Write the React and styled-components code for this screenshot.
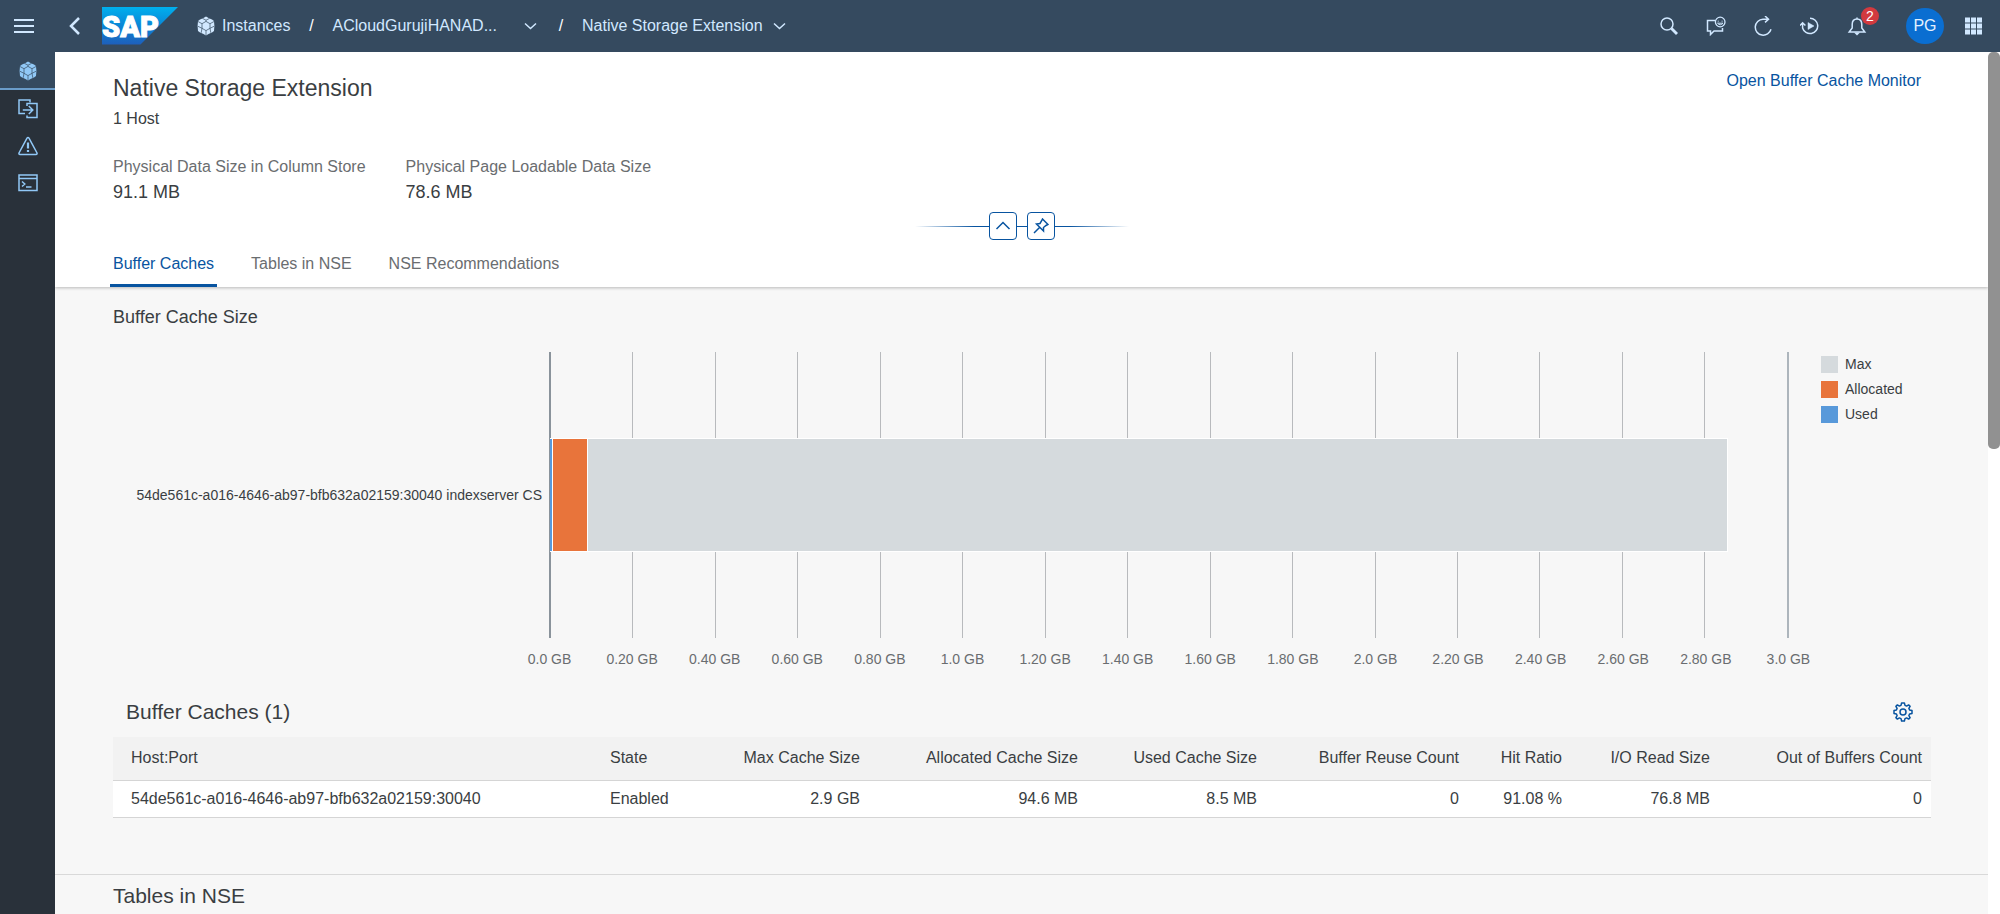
import React from "react";
import styled, { createGlobalStyle } from "styled-components";

const GlobalStyle = createGlobalStyle`
  *, *::before, *::after {
    box-sizing: border-box;
  }

  body {
    margin: 0;
    font-family: "Liberation Sans", Arial, sans-serif;
    font-size: 16px;
    line-height: 20px;
    color: #3a3e42;
    background-color: #f7f7f7;
  }

  h1, h2, h3, p, dl, dd, ul {
    margin: 0;
    padding: 0;
    font-weight: normal;
  }

  button {
    padding: 0;
    border: none;
    background: none;
    font: inherit;
    color: inherit;
    cursor: pointer;
  }

  a {
    color: inherit;
    text-decoration: none;
  }

  svg {
    display: block;
  }
`;

const Page = styled.div`
  display: flex;
  flex-direction: column;
  height: 100vh;
  overflow: hidden;
`;

/* ---------- Shell bar ---------- */

const ShellBar = styled.header`
  display: flex;
  align-items: center;
  justify-content: space-between;
  flex-shrink: 0;
  height: 52px;
  padding-right: 16px;
  background-color: #354a5f;
  color: #d1e8ff;
`;

const ShellGroup = styled.div`
  display: flex;
  align-items: center;
`;

const ShellButton = styled.button`
  position: relative;
  display: flex;
  align-items: center;
  justify-content: center;
  width: ${({ $width }) => $width || 47}px;
  height: 40px;
`;

const Badge = styled.span`
  position: absolute;
  top: 1px;
  right: 1px;
  width: 18px;
  height: 18px;
  border-radius: 9px;
  background-color: #d23a3f;
  color: white;
  font-size: 14px;
  line-height: 18px;
  text-align: center;
`;

const Avatar = styled.button`
  width: 38px;
  height: 36px;
  margin: 0 20px 0 26px;
  border-radius: 50%;
  background-color: #0a6ed1;
  color: #e3f1ff;
`;

const Breadcrumb = styled.nav`
  display: flex;
  align-items: center;
  margin-left: 18px;
  white-space: nowrap;
`;

const Crumb = styled.a`
  display: flex;
  align-items: center;
  gap: 6px;
`;

const Slash = styled.span`
  width: 42px;
  color: white;
  text-align: center;
`;

const CrumbMenu = styled.button`
  display: flex;
  align-items: center;
  justify-content: center;
  width: 18px;
  height: 28px;
  margin-left: ${({ $gap }) => $gap}px;
`;

/* ---------- Layout ---------- */

const Body = styled.div`
  display: flex;
  flex: 1;
  min-height: 0;
`;

const SideNav = styled.nav`
  display: flex;
  flex-direction: column;
  flex-shrink: 0;
  width: 55px;
  background-color: #29313a;
`;

const SideItem = styled.button`
  display: flex;
  align-items: center;
  justify-content: center;
  height: 37px;
  color: #91c8f6;

  &.active {
    height: 38px;
    padding-top: 2px;
    background-color: #354a5f;
    border-bottom: 2px solid #6a9cc9;
  }
`;

const Main = styled.main`
  flex: 1;
  min-width: 0;
  overflow: hidden;
`;

const ScrollTrack = styled.div`
  flex-shrink: 0;
  width: 12px;
  background-color: white;
`;

const ScrollThumb = styled.div`
  height: 46%;
  border-radius: 5px;
  background-color: #919191;
`;

/* ---------- Object header ---------- */

const ObjectHeader = styled.section`
  position: relative;
  background-color: white;
  box-shadow: 0 1px 3px rgba(0, 0, 0, 0.25);
`;

const HeaderTop = styled.div`
  display: flex;
  justify-content: space-between;
  align-items: flex-start;
  padding: 21px 67px 0 58px;
`;

const PageTitle = styled.h1`
  margin-bottom: 6px;
  font-size: 23px;
  line-height: 30px;
`;

const HeaderLink = styled.a`
  color: #0854a0;
  line-height: 16px;
`;

const Facts = styled.dl`
  display: flex;
  gap: 40px;
  padding: 28px 58px 8px;
`;

const FactLabel = styled.dt`
  margin-bottom: 3px;
  color: #6a6d70;
`;

const FactValue = styled.dd`
  font-size: 18px;
  line-height: 24px;
`;

const HeaderActions = styled.div`
  display: flex;
  align-items: center;
  justify-content: center;
  height: 28px;
`;

const FadeLine = styled.span`
  width: ${({ $width }) => $width}px;
  height: 1px;
  background: ${({ $to }) =>
    $to ? `linear-gradient(to ${$to}, #0854a0 20%, transparent)` : "#0854a0"};
`;

const SquareButton = styled.button`
  display: flex;
  align-items: center;
  justify-content: center;
  width: 28px;
  height: 28px;
  border: 1px solid #0854a0;
  border-radius: 4px;
  color: #0854a0;
`;

const Tabs = styled.div`
  display: flex;
  gap: 31px;
  padding: 0 55px;
`;

const Tab = styled.button`
  height: 47px;
  padding: 14px 3px 10px;
  border-bottom: 3px solid transparent;
  color: #6a6d70;
  line-height: 20px;

  &.active {
    color: #0854a0;
    border-bottom-color: #0854a0;
  }
`;

/* ---------- Sections ---------- */

const Section = styled.section`
  padding: 18px 57px 56px 58px;
  border-bottom: 1px solid #d9d9d9;
`;

const SectionTitle = styled.h2`
  font-size: 18px;
  line-height: 24px;
`;

const TableTitle = styled.h2`
  font-size: 21px;
  line-height: 24px;
`;

const LowerSection = styled.section`
  padding: 9px 58px;
`;

/* ---------- Chart ---------- */

const Chart = styled.div`
  display: grid;
  grid-template-columns: 436px 1fr 142px;
  margin-top: 23px;
  font-size: 14px;
`;

const Category = styled.div`
  display: flex;
  align-items: center;
  justify-content: flex-end;
  padding-right: 7px;
`;

const Plot = styled.div`
  display: grid;
  align-items: center;
  height: 286px;
`;

const GridLines = styled.div`
  grid-area: 1 / 1;
  display: flex;
  justify-content: space-between;
  height: 100%;
`;

const GridLine = styled.span`
  width: 1px;
  background-color: #b8babd;

  &:first-child {
    width: 2px;
    background-color: #8a939b;
  }

  &:last-child {
    width: 2px;
    background-color: #adb5bc;
  }
`;

const BarRow = styled.div`
  grid-area: 1 / 1;
  display: flex;
  height: 114px;
  margin-left: 1px;
`;

const Bar = styled.span`
  border: solid white;
  border-width: 1px 1px 1px 0;
  background-color: ${({ $color }) => $color};
`;

const Legend = styled.ul`
  display: flex;
  flex-direction: column;
  gap: 5px;
  padding: 2px 0 0 32px;
  list-style: none;
`;

const LegendItem = styled.li`
  display: flex;
  align-items: center;
  gap: 7px;

  &::before {
    content: "";
    width: 17px;
    height: 17px;
    background-color: ${({ $color }) => $color};
  }
`;

const AxisLabels = styled.div`
  grid-column: 2;
  display: flex;
  justify-content: space-between;
  padding-top: 11px;
  color: #6a6d70;
`;

const AxisLabel = styled.span`
  display: flex;
  justify-content: center;
  width: 1px;
  white-space: nowrap;
`;

/* ---------- Table ---------- */

const TableToolbar = styled.div`
  display: flex;
  align-items: center;
  justify-content: space-between;
  height: 50px;
  margin-top: 18px;
  padding: 0 18px 0 13px;
`;

const GearButton = styled.button`
  color: #0854a0;
`;

const Table = styled.table`
  width: 100%;
  table-layout: fixed;
  border-collapse: collapse;
  white-space: nowrap;
`;

const Cell = styled.td`
  height: 37px;
  padding: 0 9px;
  background-color: white;
  border-bottom: 1px solid #d5d5d5;
  text-align: ${({ $right }) => ($right ? "right" : "left")};

  &:first-child {
    padding-left: 18px;
  }
`;

const HeadCell = styled(Cell)`
  height: 43px;
  background-color: #f2f2f2;
  font-weight: normal;
`;

const COLORS = { Max: "#d5dadd", Allocated: "#e8743b", Used: "#5899da" };

const TICKS = [
  "0.0 GB", "0.20 GB", "0.40 GB", "0.60 GB", "0.80 GB", "1.0 GB", "1.20 GB", "1.40 GB",
  "1.60 GB", "1.80 GB", "2.0 GB", "2.20 GB", "2.40 GB", "2.60 GB", "2.80 GB", "3.0 GB",
];

const AXIS_MAX = 3;

// sizes in GB, stacked from the left
const SEGMENTS = [
  { name: "Used", size: 0.0083 },
  { name: "Allocated", size: 0.0841 },
  { name: "Max", size: 2.76 },
];

const COLUMNS = [
  { title: "Host:Port", width: 488, value: "54de561c-a016-4646-ab97-bfb632a02159:30040" },
  { title: "State", width: 110, value: "Enabled" },
  { title: "Max Cache Size", width: 158, value: "2.9 GB", right: true },
  { title: "Allocated Cache Size", width: 218, value: "94.6 MB", right: true },
  { title: "Used Cache Size", width: 179, value: "8.5 MB", right: true },
  { title: "Buffer Reuse Count", width: 202, value: "0", right: true },
  { title: "Hit Ratio", width: 103, value: "91.08 %", right: true },
  { title: "I/O Read Size", width: 148, value: "76.8 MB", right: true },
  { title: "Out of Buffers Count", width: 212, value: "0", right: true },
];

function Icon({ size = 20, width = size, strokeWidth = 1.5, children }) {
  return (
    <svg
      width={width}
      height={size}
      viewBox={`0 0 ${width} ${size}`}
      fill="none"
      stroke="currentColor"
      strokeWidth={strokeWidth}
      aria-hidden="true"
    >
      {children}
    </svg>
  );
}

function CubeIcon() {
  return (
    <Icon strokeWidth="0">
      <path d="M10 .5 13 2.2 16 3.6 18 5 18.4 10 18 15 16 16.4 13 17.8 10 19.5 7 17.8 4 16.4 2 15 1.6 10 2 5 4 3.6 7 2.2Z" fill="currentColor" />
      <g stroke="#354a5f" strokeWidth="0.7">
        <path d="M10 5.4 14 7.7V12.3L10 14.6 6 12.3V7.7Z" />
        <path d="M6.5 2.4 10 4.2 13.5 2.4M10 4.2V5.4M14 7.7 18 5.5M6 7.7 2 5.5M6 12.3 2 10.3M14 12.3 18 10.3M10 14.6V19.5M6 12.3 5.2 16.8M14 12.3 14.8 16.8" />
      </g>
    </Icon>
  );
}

function ChevronDown() {
  return (
    <Icon size={8} width={13}>
      <path d="M1 1.5 6.5 6.5 12 1.5" />
    </Icon>
  );
}

function SapLogo() {
  return (
    <svg width="76" height="38" viewBox="0 0 76 38" role="img" aria-label="SAP">
      <defs>
        <linearGradient id="sapBlue" x1="0" y1="0" x2="0" y2="1">
          <stop offset="0" stopColor="#00b0ee" />
          <stop offset="0.5" stopColor="#0a86d6" />
          <stop offset="1" stopColor="#1e5fbb" />
        </linearGradient>
      </defs>
      <path d="M0 0H76L38.5 37.5H0Z" fill="url(#sapBlue)" />
      <text
        x="0"
        y="30"
        fill="white"
        stroke="white"
        strokeWidth="1"
        fontFamily="Roboto, sans-serif"
        fontWeight="900"
        fontSize="29"
      >
        SAP
      </text>
    </svg>
  );
}

function Shell() {
  return (
    <ShellBar>
      <ShellGroup>
        <ShellButton $width={47} aria-label="Menu">
          <Icon strokeWidth="2">
            <path d="M0 4H20M0 10H20M0 16H20" />
          </Icon>
        </ShellButton>
        <ShellButton $width={55} aria-label="Back">
          <Icon strokeWidth="2.5">
            <path d="M14 2 6 10 14 18" />
          </Icon>
        </ShellButton>
        <SapLogo />
        <Breadcrumb aria-label="Breadcrumb">
          <Crumb href="#instances">
            <CubeIcon />
            Instances
          </Crumb>
          <Slash>/</Slash>
          <Crumb href="#database">ACloudGurujiHANAD...</Crumb>
          <CrumbMenu $gap={25} aria-label="Switch instance">
            <ChevronDown />
          </CrumbMenu>
          <Slash>/</Slash>
          <Crumb href="#nse">Native Storage Extension</Crumb>
          <CrumbMenu $gap={8} aria-label="Switch view">
            <ChevronDown />
          </CrumbMenu>
        </Breadcrumb>
      </ShellGroup>
      <ShellGroup>
        <ShellButton aria-label="Search">
          <Icon>
            <circle cx="8" cy="8" r="6" />
            <path d="M12.5 12.5 18 18" strokeWidth="2.8" />
          </Icon>
        </ShellButton>
        <ShellButton aria-label="Feedback">
          <Icon>
            <path d="M9 4.5H1.5V15H4.5V18.5L8 15H16.5V12" />
            <circle cx="14.2" cy="6" r="4.8" strokeWidth="1.3" />
            <path d="M11.5 7.2Q14.2 10.4 17 7.2Z" strokeWidth="1" />
            <path d="M12.3 4.8V5.6M16.1 4.8V5.6" strokeWidth="1.3" />
          </Icon>
        </ShellButton>
        <ShellButton aria-label="Refresh">
          <Icon>
            <path d="M18 13.3A8 8 0 1 1 10 3.2H15M12 0 15.5 3.2 12 6.4" />
          </Icon>
        </ShellButton>
        <ShellButton aria-label="Recent activity">
          <Icon>
            <path d="M10 2.2A7.7 7.7 0 1 1 2.6 12V7M0 9.5 2.6 6.8 5.4 9.5" />
            <path d="M8 6.5 14 10 8 13.5Z" fill="currentColor" strokeWidth="0.5" />
          </Icon>
        </ShellButton>
        <ShellButton aria-label="Notifications, 2 new">
          <Icon>
            <path d="M10 1.5V3C6.5 3 5.2 5.5 5.2 8.5V12L2.2 16H17.8L14.8 12V8.5C14.8 5.5 13.5 3 10 3" />
            <path d="M7 16.5H13L10 19.5Z" fill="currentColor" strokeWidth="0" />
          </Icon>
          <Badge>2</Badge>
        </ShellButton>
        <Avatar>PG</Avatar>
        <ShellButton $width={20} aria-label="Products">
          <Icon strokeWidth="0">
            {[1, 7, 13].map((y) =>
              [1, 7, 13].map((x) => (
                <rect key={`${x}-${y}`} x={x} y={y + 0.5} width="5" height="5" fill="currentColor" />
              ))
            )}
          </Icon>
        </ShellButton>
      </ShellGroup>
    </ShellBar>
  );
}

function SideNavigation() {
  return (
    <SideNav aria-label="Main">
      <SideItem className="active" aria-label="Instances">
        <CubeIcon />
      </SideItem>
      <SideItem aria-label="Data transfer">
        <Icon>
          <path d="M7 14.5H1V1H12V3.5" />
          <path d="M9 7V4.5H19V18.5H9V16.5M4.8 11H14.5M10.8 7 14.8 11 10.8 15" />
        </Icon>
      </SideItem>
      <SideItem aria-label="Alerts">
        <Icon>
          <path d="M9 2.2Q10 .6 11 2.2L19 17Q19.4 18.4 18 18.4H2Q.6 18.4 1 17Z" />
          <path d="M10 6.5V12.5M10 14V16" strokeWidth="2.2" />
        </Icon>
      </SideItem>
      <SideItem aria-label="SQL console">
        <Icon>
          <path d="M1 2H19V17.5H1ZM1 5.5H19M4 8.5 6.8 11 4 13.5M8 14H13.5" />
        </Icon>
      </SideItem>
    </SideNav>
  );
}

function Header() {
  return (
    <ObjectHeader>
      <HeaderTop>
        <div>
          <PageTitle>Native Storage Extension</PageTitle>
          <p>1 Host</p>
        </div>
        <HeaderLink href="#monitor">Open Buffer Cache Monitor</HeaderLink>
      </HeaderTop>
      <Facts>
        <div>
          <FactLabel>Physical Data Size in Column Store</FactLabel>
          <FactValue>91.1 MB</FactValue>
        </div>
        <div>
          <FactLabel>Physical Page Loadable Data Size</FactLabel>
          <FactValue>78.6 MB</FactValue>
        </div>
      </Facts>
      <HeaderActions>
        <FadeLine $width={74} $to="left" />
        <SquareButton aria-label="Collapse header">
          <Icon size={16}>
            <path d="M1.5 11 8 4.5 14.5 11" />
          </Icon>
        </SquareButton>
        <FadeLine $width={10} />
        <SquareButton aria-label="Pin header">
          <Icon size={16}>
            <path d="M9.5 1 15 6.5 13 7.5 10.5 9.5V13L3.5 6 7 5.5 8.5 3ZM6.5 9.5 1 15" />
          </Icon>
        </SquareButton>
        <FadeLine $width={74} $to="right" />
      </HeaderActions>
      <Tabs role="tablist">
        <Tab role="tab" aria-selected="true" className="active">
          Buffer Caches
        </Tab>
        <Tab role="tab" aria-selected="false">
          Tables in NSE
        </Tab>
        <Tab role="tab" aria-selected="false">
          NSE Recommendations
        </Tab>
      </Tabs>
    </ObjectHeader>
  );
}

function BufferCacheChart() {
  return (
    <Chart>
      <Category>54de561c-a016-4646-ab97-bfb632a02159:30040 indexserver CS</Category>
      <Plot>
        <GridLines>
          {TICKS.map((tick) => (
            <GridLine key={tick} />
          ))}
        </GridLines>
        <BarRow>
          {SEGMENTS.map(({ name, size }) => (
            <Bar key={name} $color={COLORS[name]} style={{ width: `${(size / AXIS_MAX) * 100}%` }} />
          ))}
        </BarRow>
      </Plot>
      <Legend>
        {Object.entries(COLORS).map(([name, color]) => (
          <LegendItem key={name} $color={color}>
            {name}
          </LegendItem>
        ))}
      </Legend>
      <AxisLabels>
        {TICKS.map((tick) => (
          <AxisLabel key={tick}>{tick}</AxisLabel>
        ))}
      </AxisLabels>
    </Chart>
  );
}

function BufferCacheTable() {
  return (
    <>
      <TableToolbar>
        <TableTitle>Buffer Caches (1)</TableTitle>
        <GearButton aria-label="Table settings">
          <Icon>
            <circle cx="10" cy="10" r="3" />
            <path
              d="M8.6 1H11.4L12 3.4 13.6 4.1 15.6 2.9 17.1 4.4 15.9 6.4 16.6 8 19 8.6V11.4L16.6 12 15.9 13.6 17.1 15.6 15.6 17.1 13.6 15.9 12 16.6 11.4 19H8.6L8 16.6 6.4 15.9 4.4 17.1 2.9 15.6 4.1 13.6 3.4 12 1 11.4V8.6L3.4 8 4.1 6.4 2.9 4.4 4.4 2.9 6.4 4.1 8 3.4Z"
              strokeLinejoin="round"
            />
          </Icon>
        </GearButton>
      </TableToolbar>
      <Table>
        <colgroup>
          {COLUMNS.map(({ title, width }) => (
            <col key={title} width={width} />
          ))}
        </colgroup>
        <thead>
          <tr>
            {COLUMNS.map(({ title, right }) => (
              <HeadCell as="th" scope="col" key={title} $right={right}>
                {title}
              </HeadCell>
            ))}
          </tr>
        </thead>
        <tbody>
          <tr>
            {COLUMNS.map(({ title, value, right }) => (
              <Cell key={title} $right={right}>
                {value}
              </Cell>
            ))}
          </tr>
        </tbody>
      </Table>
    </>
  );
}

export default function App() {
  return (
    <Page>
      <GlobalStyle />
      <Shell />
      <Body>
        <SideNavigation />
        <Main>
          <Header />
          <Section>
            <SectionTitle>Buffer Cache Size</SectionTitle>
            <BufferCacheChart />
            <BufferCacheTable />
          </Section>
          <LowerSection>
            <TableTitle>Tables in NSE</TableTitle>
          </LowerSection>
        </Main>
        <ScrollTrack>
          <ScrollThumb />
        </ScrollTrack>
      </Body>
    </Page>
  );
}
